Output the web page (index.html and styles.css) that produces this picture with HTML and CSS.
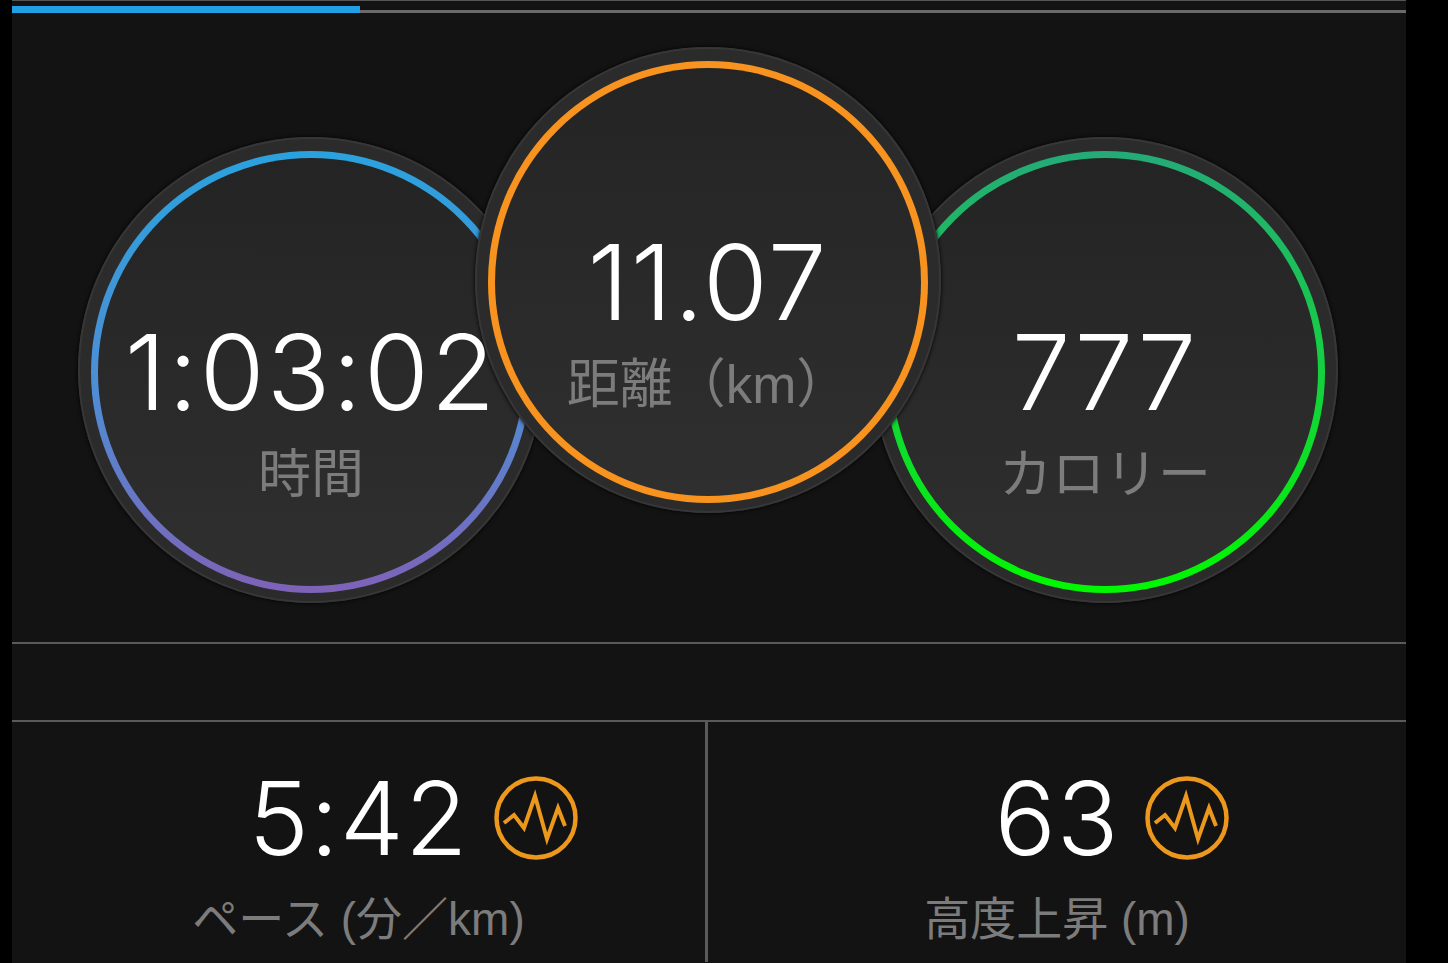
FILE: index.html
```html
<!DOCTYPE html>
<html lang="ja">
<head>
    <meta charset="UTF-8">
    <meta name="viewport" content="width=device-width, initial-scale=1.0">
    <title>Activity</title>
    <link rel="stylesheet" href="styles.css">
</head>
<body>
    <div class="screen">
        <div class="progress">
            <div class="progress-fill"></div>
        </div>

        <section class="rings">
            <div class="ring-card ring-side">
                <div class="ring ring-time">
                    <div class="ring-value">1:03:02</div>
                    <div class="ring-label">時間</div>
                </div>
            </div>
            <div class="ring-card ring-main">
                <div class="ring ring-distance">
                    <div class="ring-value">11.07</div>
                    <div class="ring-label">距離（km）</div>
                </div>
            </div>
            <div class="ring-card ring-side">
                <div class="ring ring-calories">
                    <div class="ring-value">777</div>
                    <div class="ring-label">カロリー</div>
                </div>
            </div>
        </section>

        <div class="spacer-row"></div>

        <section class="stats">
            <div class="stat">
                <div class="stat-value">
                    5:42
                    <svg class="stat-icon" viewBox="0 0 84 84">
                        <circle cx="42" cy="42" r="39.5"></circle>
                        <path d="M10 47 L20 39 L30 52 L41 20 L53 63 L64 32 L71 50"></path>
                    </svg>
                </div>
                <div class="stat-label">ペース (分／km)</div>
            </div>
            <div class="stat">
                <div class="stat-value">
                    63
                    <svg class="stat-icon" viewBox="0 0 84 84">
                        <circle cx="42" cy="42" r="39.5"></circle>
                        <path d="M10 47 L20 39 L30 52 L41 20 L53 63 L64 32 L71 50"></path>
                    </svg>
                </div>
                <div class="stat-label">高度上昇 (m)</div>
            </div>
        </section>
    </div>
</body>
</html>
```

FILE: styles.css
```css
body {
    margin: 0;
    background-color: #000;
    font-family: "Liberation Sans", "Noto Sans CJK JP", sans-serif;
    color: #fff;
}

.screen {
    width: 1394px;
    height: 963px;
    margin-left: 12px;
    background-color: #131313;
    overflow: hidden;
    border-top: 1px solid #555;
    box-sizing: border-box;
}

/* Top progress bar */
.progress {
    height: 12px;
    box-sizing: border-box;
    padding-top: 5px;
    border-bottom: 3px solid #6a6a6a;
}

.progress-fill {
    width: 348px;
    height: 7px;
    background-color: #22a0e6;
}

/* Three overlapping rings */
.rings {
    display: flex;
    height: 631px;
    padding-left: 66px;
    box-sizing: border-box;
    border-bottom: 2px solid #5a5a5a;
}

.ring-card {
    width: 466px;
    height: 466px;
    flex-shrink: 0;
    box-sizing: border-box;
    padding: 14px 13px 10px;
    border-radius: 50%;
    background-color: #2b2b2b;
    box-shadow: inset 0 0 0 2px #363636, 0 0 4px #000;
}

.ring-side {
    margin-top: 124px;
}

.ring-main {
    margin-top: 34px;
    margin-left: -69px;
    margin-right: -69px;
    position: relative;
    z-index: 1;
}

.ring {
    height: 100%;
    box-sizing: border-box;
    padding-top: 160px;
    border: 7px solid transparent;
    border-radius: 50%;
    display: flex;
    flex-direction: column;
    align-items: center;
    --fill: linear-gradient(#242424, #2f2f2f);
}

.ring-time {
    background: var(--fill) padding-box, linear-gradient(#2aa2de 0%, #4f8dd4 55%, #7e62b8 100%) border-box;
}

.ring-distance {
    background: var(--fill) padding-box, linear-gradient(#f7931e, #f7931e) border-box;
}

.ring-calories {
    background: var(--fill) padding-box, linear-gradient(#24ab78 0%, #15d040 50%, #00f800 100%) border-box;
}

.ring-value {
    font-family: Inter, "Liberation Sans", sans-serif;
    font-size: 105px;
    font-weight: 350;
    line-height: 108px;
    letter-spacing: 2px;
    white-space: nowrap;
    position: relative;
    z-index: 2;
}

.ring-label {
    margin-top: 19px;
    font-size: 53px;
    line-height: 60px;
    color: #7c7c7c;
    white-space: nowrap;
}

.spacer-row {
    height: 76px;
    border-bottom: 2px solid #5a5a5a;
}

/* Bottom stats */
.stats {
    display: grid;
    grid-template-columns: 693px 1fr;
}

.stat {
    height: 240px;
    display: flex;
    flex-direction: column;
    align-items: center;
    padding-top: 44px;
    box-sizing: border-box;
}

.stat + .stat {
    border-left: 3px solid #5a5a5a;
}

.stat-value {
    position: relative;
    font-family: Inter, "Liberation Sans", sans-serif;
    font-size: 102px;
    font-weight: 350;
    line-height: 104px;
    letter-spacing: 1px;
    white-space: nowrap;
}

.stat-icon {
    position: absolute;
    left: calc(100% + 25px);
    top: 10px;
    width: 84px;
    height: 84px;
    fill: none;
    stroke: #ec981c;
}

.stat-icon circle {
    stroke-width: 4.5;
}

.stat-icon path {
    stroke-width: 4;
}

.stat-label {
    margin-top: 19px;
    font-size: 46px;
    line-height: 60px;
    color: #7c7c7c;
    white-space: nowrap;
}
```
